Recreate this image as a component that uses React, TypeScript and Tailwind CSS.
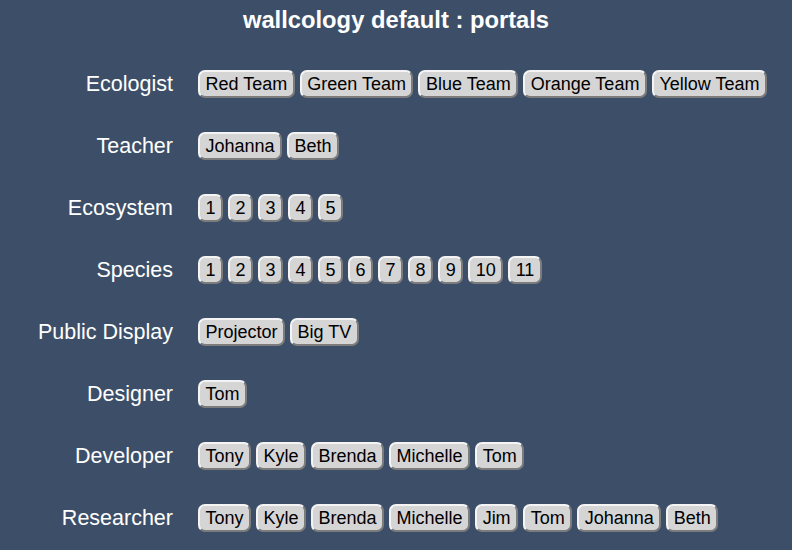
import React from "react";

const ROWS: { label: string; items: string[] }[] = [
  { label: "Ecologist", items: ["Red Team", "Green Team", "Blue Team", "Orange Team", "Yellow Team"] },
  { label: "Teacher", items: ["Johanna", "Beth"] },
  { label: "Ecosystem", items: ["1", "2", "3", "4", "5"] },
  { label: "Species", items: ["1", "2", "3", "4", "5", "6", "7", "8", "9", "10", "11"] },
  { label: "Public Display", items: ["Projector", "Big TV"] },
  { label: "Designer", items: ["Tom"] },
  { label: "Developer", items: ["Tony", "Kyle", "Brenda", "Michelle", "Tom"] },
  { label: "Researcher", items: ["Tony", "Kyle", "Brenda", "Michelle", "Jim", "Tom", "Johanna", "Beth"] },
];

function PortalButton({ text }: { text: string }) {
  return (
    <button className="rounded-[7px] border-2 border-t-[#f4f4f4] border-l-[#f4f4f4] border-b-[#7c7c7c] border-r-[#7c7c7c] bg-[#d5d5d5] px-[5.5px] py-[2px] text-[18px] leading-[20px] text-black">
      {text}
    </button>
  );
}

export default function App() {
  return (
    <div className="min-h-[550px] w-full bg-[#3d4f68] font-['Liberation_Sans',Arial,sans-serif] text-white">
      <div className="flex h-[40px] items-center justify-center text-[23.75px] font-bold">
        wallcology default : portals
      </div>
      <div className="mt-[13px] flex flex-col">
        {ROWS.map((row) => (
          <div key={row.label} className="flex h-[62px] items-center gap-[25px]">
            <div className="w-[173px] shrink-0 text-right text-[21.5px]">{row.label}</div>
            <div className="flex gap-[5px]">
              {row.items.map((it, i) => (
                <PortalButton key={i} text={it} />
              ))}
            </div>
          </div>
        ))}
      </div>
    </div>
  );
}
